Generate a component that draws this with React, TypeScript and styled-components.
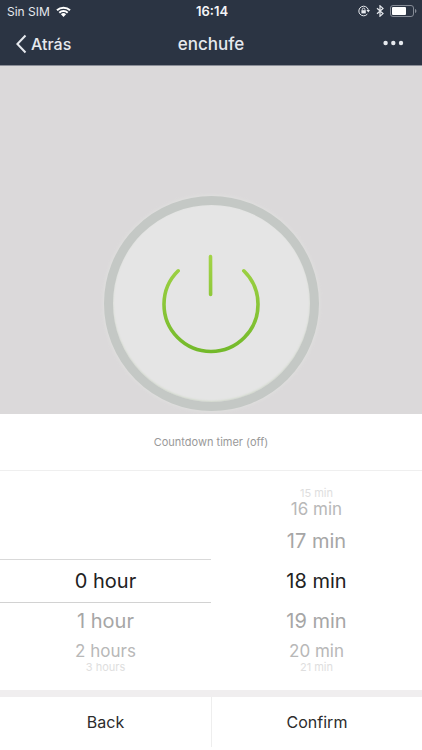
import React, { useState } from 'react';
import styled, { createGlobalStyle, css } from 'styled-components';

const GlobalStyle = createGlobalStyle`
  * { box-sizing: border-box; }
  body {
    margin: 0;
    background: #ffffff;
    font-family: Inter, "Liberation Sans", sans-serif;
  }
  button {
    margin: 0;
    padding: 0;
    border: 0;
    background: none;
    font: inherit;
    color: inherit;
    cursor: pointer;
  }
`;

const Screen = styled.main`
  display: flex;
  flex-direction: column;
  min-height: 100vh;
`;

const Header = styled.header`
  background: #2b3443;
  color: #e6e9ee;
  border-bottom: 1px solid #8b8e97;
`;

const StatusBar = styled.div`
  display: grid;
  grid-template-columns: 1fr auto 1fr;
  align-items: center;
  height: 22px;
  padding: 0 5px 0 7px;
  font-size: 12px;
`;

const StatusGroup = styled.div<{ $end?: boolean }>`
  display: flex;
  align-items: center;
  justify-content: ${({ $end }) => ($end ? 'flex-end' : 'flex-start')};
  gap: 6px;
`;

const Clock = styled.time`
  font-weight: 600;
  font-size: 13px;
  color: #f4f5f7;
`;

const NavBar = styled.nav`
  display: grid;
  grid-template-columns: 1fr auto 1fr;
  align-items: center;
  height: 43px;
  padding: 0 16px;
`;

const NavButton = styled.button<{ $end?: boolean }>`
  display: flex;
  align-items: center;
  gap: 4px;
  justify-self: ${({ $end }) => ($end ? 'end' : 'start')};
  font-size: 16px;
  font-weight: 500;
`;

const Title = styled.h1`
  margin: 0;
  font-size: 17px;
  font-weight: 500;
`;

const Stage = styled.section`
  flex: 1;
  display: flex;
  align-items: flex-end;
  justify-content: center;
  padding: 16px 16px 3px;
  background: #dbd9da;
`;

const PowerButton = styled.button`
  display: grid;
  place-items: center;
  width: 215px;
  height: 215px;
  border: 9px solid #c4c8c5;
  border-radius: 50%;
  background: #e5e5e5;
  box-shadow: 0 0 4px #e2e3e0, inset 0 -1px 2px #d0d8ca;
`;

const TimerStatus = styled.p`
  display: flex;
  align-items: center;
  justify-content: center;
  height: 57px;
  margin: 0;
  border-bottom: 1px solid #efefef;
  background: #ffffff;
  color: #999999;
  font-size: 11px;
`;

const Pickers = styled.section`
  display: grid;
  grid-template-columns: 1fr 1fr;
  height: 219px;
`;

const Wheel = styled.div`
  display: grid;
  grid-template-rows: 6px 26px 36px 44px 36px 26px 6px;
  align-content: center;
`;

const tiers = [
  css`font-size: 20px; color: #222222;`,
  css`font-size: 20px; color: #a6a6a6;`,
  css`font-size: 17px; color: #b8b8b8;`,
  css`font-size: 11px; color: #dedede;`,
];

const WheelSlot = styled.div<{ $distance: number; $ruled: boolean }>`
  display: flex;
  align-items: center;
  justify-content: center;
  ${({ $distance }) => tiers[$distance]}
  ${({ $ruled }) => $ruled && css`
    border-top: 1px solid #d9d9d9;
    border-bottom: 1px solid #d2d2d2;
  `}
`;

const WheelOption = styled.button`
  line-height: 1;
  white-space: nowrap;
`;

const Footer = styled.footer`
  display: grid;
  grid-template-columns: 1fr 1fr;
  border-top: 7px solid #f0eeef;
  padding-bottom: 3px;
  background: #ffffff;
`;

const FooterButton = styled.button`
  height: 50px;
  color: #2c2c2c;
  font-size: 16px;

  & + & {
    border-left: 1px solid #eeeeee;
  }
`;

const WifiIcon = () => (
  <svg width="15" height="11" viewBox="0 0 15 11" aria-hidden="true">
    <path d="M.3 3.6a10.4 10.4 0 0 1 14.4 0l-1.4 1.5a8.4 8.4 0 0 0-11.6 0z" fill="#fff" />
    <path d="M2.6 6a7.1 7.1 0 0 1 9.8 0L11 7.4a5.1 5.1 0 0 0-7 0z" fill="#fff" />
    <path d="M4.9 8.3a3.8 3.8 0 0 1 5.2 0L7.5 10.9z" fill="#fff" />
  </svg>
);

const RotationLockIcon = () => (
  <svg width="12" height="12" viewBox="0 0 12 12" fill="none" stroke="#e6e9ee" aria-hidden="true">
    <path d="M9.4 9A4.8 4.8 0 1 1 10.300 4.900" />
    <path d="M8.4 5h3.6L10.3 7.4z" fill="#e6e9ee" stroke="none" />
    <rect x="3.4" y="5.2" width="4.4" height="3.2" fill="#e6e9ee" stroke="none" />
    <path d="M4.3 5.3V4.400a1.300 1.300 0 0 1 2.600 0v.9" strokeWidth=".9" />
  </svg>
);

const BluetoothIcon = () => (
  <svg width="8" height="12" viewBox="0 0 8 12" fill="none" stroke="#e6e9ee" strokeWidth="1.2" aria-hidden="true">
    <path d="M1 3.2l6 5.4L4 11.2V.8l3 2.6-6 5.4" />
  </svg>
);

const BatteryIcon = () => (
  <svg width="27" height="12" viewBox="0 0 27 12" aria-hidden="true">
    <rect x=".5" y=".5" width="23" height="11" rx="2.5" fill="none" stroke="#858b96" />
    <rect x="2" y="2" width="14" height="8" rx="1" fill="#fff" />
    <path d="M25 4v4c1-.4 1.4-1 1.4-2S26 4.4 25 4z" fill="#858b96" />
  </svg>
);

const BackIcon = () => (
  <svg width="11" height="20" viewBox="0 0 11 20" fill="none" stroke="#e6e9ee" strokeWidth="2" aria-hidden="true">
    <path d="M9.5 1.5L1.400 10l8.100 8.500" />
  </svg>
);

const MoreIcon = () => (
  <svg width="23" height="8" viewBox="0 0 23 8" fill="#e6e9ee" aria-hidden="true">
    <circle cx="2.600" cy="3" r="2.200" />
    <circle cx="10.300" cy="3" r="2.200" />
    <circle cx="18" cy="3" r="2.200" />
  </svg>
);

const PowerIcon = () => (
  <svg width="104" height="104" viewBox="0 0 104 104" fill="none" stroke="url(#powerGreen)" strokeWidth="3.600" strokeLinecap="round" aria-hidden="true">
    <defs>
      <linearGradient id="powerGreen" gradientUnits="userSpaceOnUse" x1="0" y1="2" x2="0" y2="100">
        <stop offset="0" stopColor="#a3d447" />
        <stop offset="1" stopColor="#73b92a" />
      </linearGradient>
    </defs>
    <path d="M19.200 18.800A47 47 0 1 0 84.800 18.800" />
    <path d="M51.500 4.500L51.600 42.500" />
  </svg>
);

type PickerProps = {
  label: string;
  value: number;
  max: number;
  format: (value: number) => string;
  ruled?: boolean;
  onChange: (value: number) => void;
};

const offsets = [-3, -2, -1, 0, 1, 2, 3];

function Picker({ label, value, max, format, ruled = false, onChange }: PickerProps) {
  return (
    <Wheel role="group" aria-label={label}>
      {offsets.map((offset) => {
        const option = value + offset;
        return (
          <WheelSlot key={offset} $distance={Math.abs(offset)} $ruled={ruled && offset === 0}>
            {option >= 0 && option <= max && (
              <WheelOption type="button" aria-pressed={offset === 0} onClick={() => onChange(option)}>
                {format(option)}
              </WheelOption>
            )}
          </WheelSlot>
        );
      })}
    </Wheel>
  );
}

export default function App() {
  const [hours, setHours] = useState(0);
  const [minutes, setMinutes] = useState(18);

  return (
    <>
      <GlobalStyle />
      <Screen>
        <Header>
          <StatusBar>
            <StatusGroup>
              <span>Sin SIM</span>
              <WifiIcon />
            </StatusGroup>
            <Clock>16:14</Clock>
            <StatusGroup $end>
              <RotationLockIcon />
              <BluetoothIcon />
              <BatteryIcon />
            </StatusGroup>
          </StatusBar>
          <NavBar>
            <NavButton type="button">
              <BackIcon />
              Atrás
            </NavButton>
            <Title>enchufe</Title>
            <NavButton type="button" $end aria-label="Más">
              <MoreIcon />
            </NavButton>
          </NavBar>
        </Header>
        <Stage>
          <PowerButton type="button" aria-label="Power">
            <PowerIcon />
          </PowerButton>
        </Stage>
        <TimerStatus>Countdown timer (off)</TimerStatus>
        <Pickers>
          <Picker
            label="Hours"
            value={hours}
            max={23}
            format={(n) => `${n} ${n < 2 ? 'hour' : 'hours'}`}
            ruled
            onChange={setHours}
          />
          <Picker label="Minutes" value={minutes} max={59} format={(n) => `${n} min`} onChange={setMinutes} />
        </Pickers>
        <Footer>
          <FooterButton type="button">Back</FooterButton>
          <FooterButton type="button">Confirm</FooterButton>
        </Footer>
      </Screen>
    </>
  );
}
